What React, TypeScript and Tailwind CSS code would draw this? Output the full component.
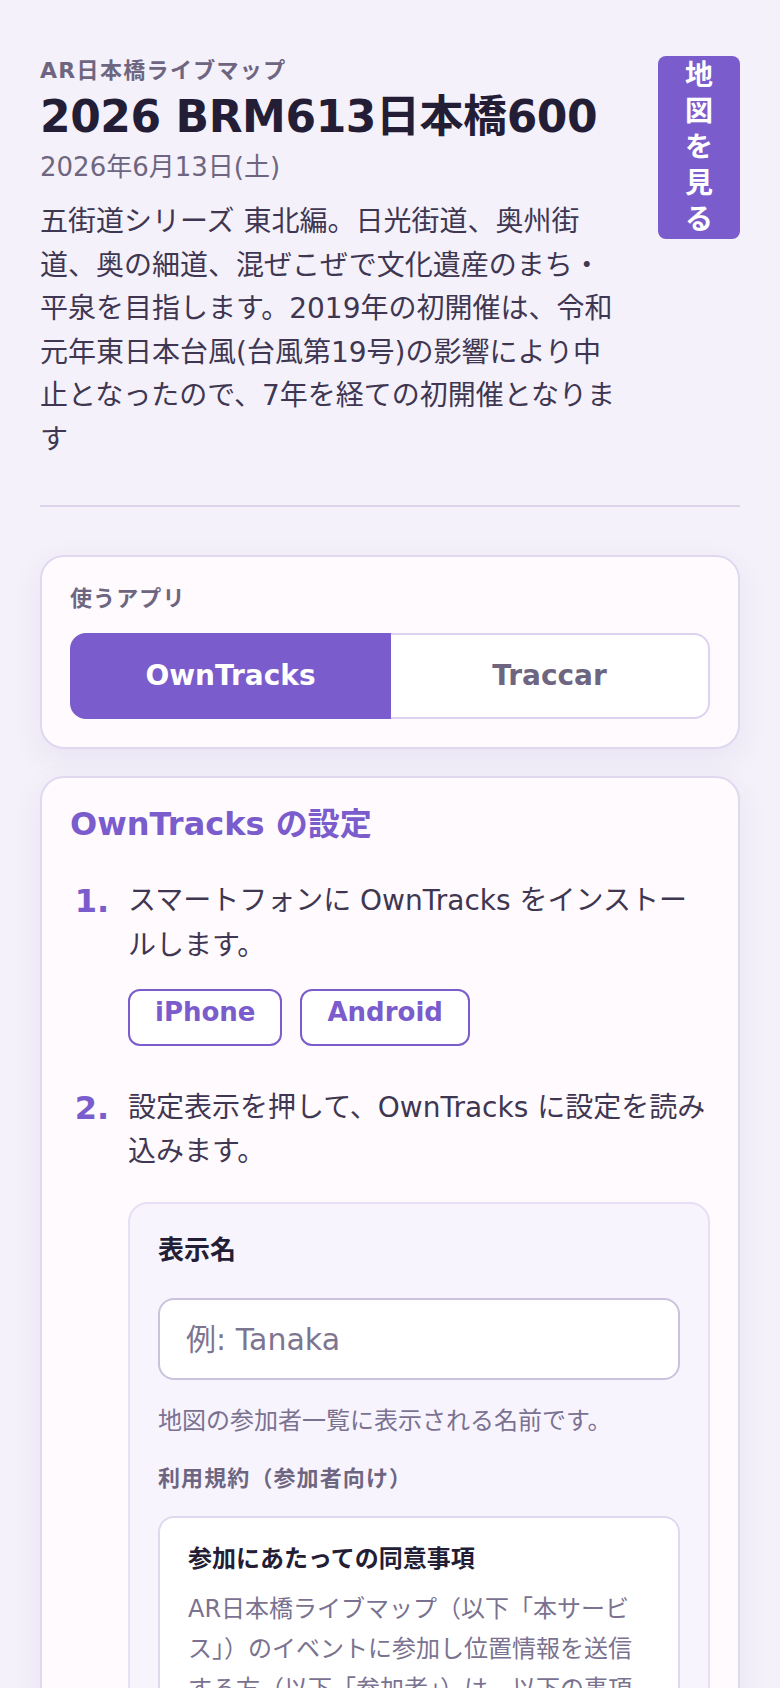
import React from "react";

const purple = "text-[#7a5ccc]";

function Step({ n, children }: { n: number; children: React.ReactNode }) {
  return (
    <li className="flex gap-[14px]">
      <span className={`w-[44px] shrink-0 text-center text-[32px] font-bold leading-[44.8px] ${purple}`}>
        {n}.
      </span>
      <div className="min-w-0 flex-1">{children}</div>
    </li>
  );
}

export default function App() {
  return (
    <div className="min-h-screen bg-[#f4f1fa] px-[40px] pt-[56px] pb-[60px] font-['DejaVu_Sans','Noto_Sans_CJK_JP',sans-serif]">
      {/* event header */}
      <header className="flex items-start gap-[32px]">
        <div className="min-w-0 flex-1">
          <p className="text-[22px] font-bold leading-[30px] tracking-[0.06em] text-[#6e6680]">
            AR日本橋ライブマップ
          </p>
          <h1 className="mt-[4px] text-[44px] font-bold leading-[53px] tracking-[-0.01em] text-[#241d36]">
            2026 BRM613日本橋600
          </h1>
          <p className="mt-[5px] text-[26px] leading-[39px] text-[#6e6680]">2026年6月13日(土)</p>
          <p className="mt-[13px] text-[28px] leading-[43.5px] text-[#3f3752]">
            五街道シリーズ 東北編。日光街道、奥州街道、奥の細道、混ぜこぜで文化遺産のまち・平泉を目指します。2019年の初開催は、令和元年東日本台風(台風第19号)の影響により中止となったので、7年を経ての初開催となります
          </p>
        </div>
        <button className="w-[82px] shrink-0 rounded-[8px] bg-[#7a5ccc] px-[20px] py-[1.5px] text-center text-[28px] font-bold leading-[36px] text-white">
          地図を見る
        </button>
      </header>

      <div className="mt-[44px] h-[2px] bg-[#ddd4ec]" />

      {/* app picker */}
      <section className="mt-[48px] rounded-[24px] border-2 border-[#e0d8ef] bg-[#fffafe] p-[28px] shadow-[0_10px_30px_rgba(90,70,150,0.08)]">
        <p className="text-[22px] font-bold leading-[28px] tracking-[0.05em] text-[#6e6680]">使うアプリ</p>
        <div className="mt-[20px] flex h-[86px]">
          <button className="flex-1 rounded-l-[16px] border-2 border-[#7a5ccc] bg-[#7a5ccc] text-[28px] font-bold text-white">
            OwnTracks
          </button>
          <button className="flex-1 rounded-r-[16px] border-2 border-l-0 border-[#ddd3f0] bg-white text-[28px] font-bold text-[#6e6680]">
            Traccar
          </button>
        </div>
      </section>

      {/* OwnTracks setup */}
      <section className="mt-[27px] rounded-[24px] border-2 border-[#e0d8ef] bg-[#fffafe] p-[28px] shadow-[0_10px_30px_rgba(90,70,150,0.08)]">
        <h2 className={`text-[32px] font-bold leading-[36px] ${purple}`}>OwnTracks の設定</h2>
        <ol className="mt-[37px] text-[28px] leading-[44.8px] text-[#3f3752]">
          <Step n={1}>
            <p>スマートフォンに OwnTracks をインストールします。</p>
            <div className="mt-[20px] flex gap-[18px]">
              <a className="rounded-[12px] border-2 border-[#7a5ccc] bg-white px-[25px] pt-[4px] pb-[15px] text-[26px] font-bold leading-[34px] text-[#7a5ccc]">
                iPhone
              </a>
              <a className="rounded-[12px] border-2 border-[#7a5ccc] bg-white px-[25px] pt-[4px] pb-[15px] text-[26px] font-bold leading-[34px] text-[#7a5ccc]">
                Android
              </a>
            </div>
          </Step>
          <div className="h-[40px]" />
          <Step n={2}>
            <p>設定表示を押して、OwnTracks に設定を読み込みます。</p>
            <div className="mt-[27px] rounded-[20px] border-2 border-[#e6dff5] bg-[#f7f4fe] p-[28px]">
              <p className="text-[26px] font-bold leading-[36px] text-[#241d36]">表示名</p>
              <input
                className="mt-[30px] block h-[82px] w-full rounded-[16px] border-2 border-[#cbc2de] bg-white px-[26px] text-[30px] text-[#241d36] outline-none placeholder:text-[#7d7590]"
                placeholder="例: Tanaka"
              />
              <p className="mt-[23px] text-[24px] leading-[36px] text-[#7a7290]">
                地図の参加者一覧に表示される名前です。
              </p>
              <p className="mt-[25px] text-[22px] font-bold leading-[30px] tracking-[0.05em] text-[#6e6680]">
                利用規約（参加者向け）
              </p>
              <div className="mt-[22px] rounded-[16px] border-2 border-[#e0d8ef] bg-white px-[28px] pt-[24px] pb-[28px]">
                <p className="text-[24px] font-bold leading-[34px] text-[#241d36]">参加にあたっての同意事項</p>
                <p className="mt-[13px] text-[24px] leading-[40px] text-[#7a7290]">
                  AR日本橋ライブマップ（以下「本サービス」）のイベントに参加し位置情報を送信する方（以下「参加者」）は、以下の事項に同意したうえで本サービスを利用するものとします。
                </p>
              </div>
            </div>
          </Step>
        </ol>
      </section>
    </div>
  );
}
